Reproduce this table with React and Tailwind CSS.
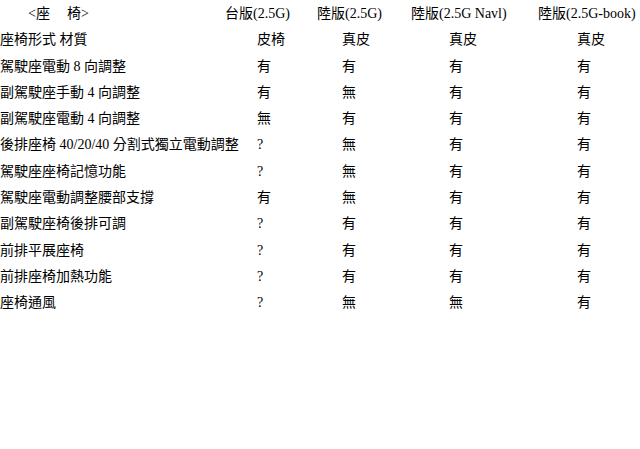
import React from "react";

// 座椅配備對照表
const rows = [
  ["座椅形式 材質", "皮椅", "真皮", "真皮", "真皮"],
  ["駕駛座電動 8 向調整", "有", "有", "有", "有"],
  ["副駕駛座手動 4 向調整", "有", "無", "有", "有"],
  ["副駕駛座電動 4 向調整", "無", "有", "有", "有"],
  ["後排座椅 40/20/40 分割式獨立電動調整", "?", "無", "有", "有"],
  ["駕駛座座椅記憶功能", "?", "無", "有", "有"],
  ["駕駛座電動調整腰部支撐", "有", "無", "有", "有"],
  ["副駕駛座椅後排可調", "?", "有", "有", "有"],
  ["前排平展座椅", "?", "有", "有", "有"],
  ["前排座椅加熱功能", "?", "有", "有", "有"],
  ["座椅通風", "?", "無", "無", "有"],
];

const headers = ["台版(2.5G)", "陸版(2.5G)", "陸版(2.5G Navl)", "陸版(2.5G-book)"];
const valuePad = ["pl-[32px]", "pl-[25px]", "pl-[38px]", "pl-[39px]"];

const Row = ({ children }) => (
  <div className="grid grid-cols-[225px_92px_94px_127px_1fr] h-[26.27px] items-center whitespace-nowrap">
    {children}
  </div>
);

export default function App() {
  return (
    <div
      className="w-[640px] h-[449px] bg-white text-black text-[14px] leading-none overflow-hidden pt-[1px]"
      style={{ fontFamily: '"Liberation Serif", "Noto Sans CJK TC", serif' }}
    >
      <Row>
        <div className="pl-[28px]">
          &lt;座<span className="inline-block w-[17px]" />椅&gt;
        </div>
        {headers.map((h) => (
          <div key={h}>{h}</div>
        ))}
      </Row>
      {rows.map((r) => (
        <Row key={r[0]}>
          <div>{r[0]}</div>
          {r.slice(1).map((v, i) => (
            <div key={i} className={valuePad[i]}>
              {v}
            </div>
          ))}
        </Row>
      ))}
    </div>
  );
}
